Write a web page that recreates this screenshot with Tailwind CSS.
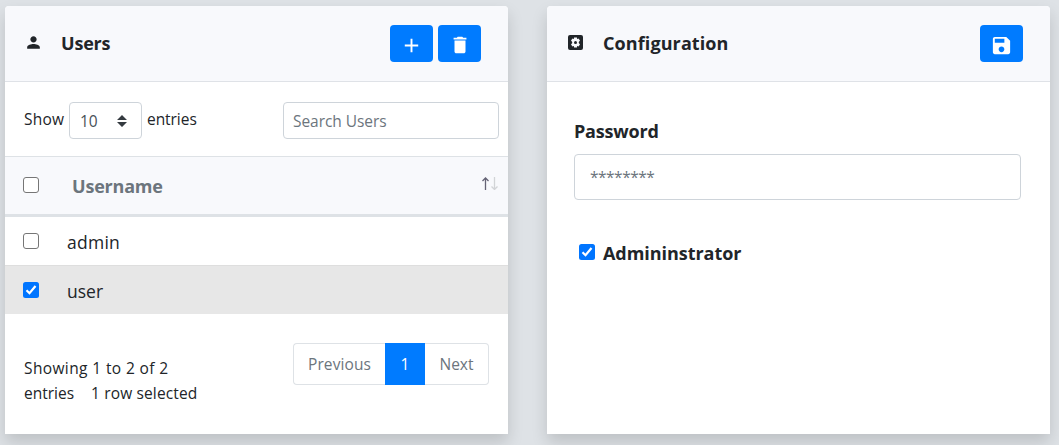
<!DOCTYPE html>
<html lang="en">
<head>
<meta charset="utf-8">
<title>Users</title>
<script src="https://cdn.jsdelivr.net/npm/@tailwindcss/browser@4"></script>
</head>
<body class="h-[445px] overflow-hidden bg-[#dee2e6] font-['Open_Sans','Noto_Sans',sans-serif] text-[15.5px] leading-6 text-[#212529]">
<main class="flex gap-[39px] pl-[5px] pt-[6px]">
  <section class="flex h-[428px] w-[503px] shrink-0 flex-col rounded-t bg-white shadow-[0_8px_16px_rgba(0,0,0,0.15)]">
    <header class="flex h-[76px] shrink-0 items-center rounded-t border-b border-[#dfe2e7] bg-[#f8f9fc] pl-[19px] pr-[27px]">
      <svg class="mb-[2px] size-[19px]" viewBox="0 0 24 24" fill="#212529"><path d="M12 12c2.200 0 4-1.800 4-4s-1.800-4-4-4-4 1.800-4 4 1.800 4 4 4zm0 2c-2.700 0-8 1.300-8 4v2h16v-2c0-2.700-5.300-4-8-4z"/></svg>
      <h2 class="mb-[2px] ml-[18px] text-lg leading-6 font-bold tracking-[-0.2px]">Users</h2>
      <button class="ml-auto flex h-[37px] w-[43px] items-center justify-center rounded bg-[#007bff]"><svg class="mt-[3px] size-[23px]" viewBox="0 0 24 24" fill="#fff"><path d="M19 13h-6v6h-2v-6H5v-2h6V5h2v6h6z"/></svg></button>
      <button class="ml-[5px] flex h-[37px] w-[43px] items-center justify-center rounded bg-[#007bff]"><svg class="mt-[3px] size-[22px]" viewBox="0 0 24 24" fill="#fff"><path d="M6 19c0 1.100.9 2 2 2h8c1.100 0 2-.9 2-2V7H6zM19 4h-3.500l-1-1h-5l-1 1H5v2h14z"/></svg></button>
    </header>
    <div class="flex h-[74px] shrink-0 items-start pl-[19px] pr-[9px] pt-5">
      <span class="mt-[5px] w-[45px] tracking-[0.2px]">Show</span>
      <div class="flex h-[37px] w-[73px] items-center justify-between rounded border border-[#ced4da] pl-[10px] pr-[13px] text-[#495057]"><span>10</span>
        <svg class="h-[12px] w-[12px]" viewBox="0 0 12 12" fill="#343a40"><path d="M1 5h10L6 0zM1 7h10L6 12z"/></svg>
      </div>
      <span class="ml-[5px] mt-[5px] tracking-[-0.05px]">entries</span>
      <input class="ml-auto h-[37px] w-[216px] rounded border border-[#ced4da] px-[9px] tracking-[-0.05px] placeholder:text-[#6c757d]" placeholder="Search Users">
    </div>
    <div class="flex h-[61px] shrink-0 items-center border-b-[3px] border-t border-[#dee2e6] bg-[#f8f9fc] pl-[18px] pr-[9px]">
      <span class="mb-[2px] size-4 rounded-[3px] border border-[#767676] bg-white"></span>
      <span class="ml-[33px] text-lg leading-6 font-bold tracking-[-0.2px] text-[#6c757d]">Username</span>
      <svg class="mb-[4px] ml-auto h-[13px] w-[19px]" viewBox="0 0 19 13" fill="none"><path stroke="#656375" stroke-width="1.300" d="M5.500 13V1M2.500 4l3-3 3 3"/><path stroke="#d2d4d7" stroke-width="1.300" d="M14.500 0v12M11.500 9.500l3 3 3-3"/></svg>
    </div>
    <div class="flex h-12 shrink-0 items-center pl-[18px]">
      <span class="size-4 rounded-[3px] border border-[#767676] bg-white"></span>
      <span class="ml-[28px] mt-[2px] text-[17.5px] tracking-[0.25px]">admin</span>
    </div>
    <div class="flex h-[49px] shrink-0 items-center border-t border-[#dedede] bg-[#e7e7e7] pl-[18px]">
      <svg class="size-4" viewBox="0 0 16 16"><rect width="16" height="16" rx="2.500" fill="#0075ff"/><path d="M3.500 8.200l3 3 6-7.200" fill="none" stroke="#fff" stroke-width="2.200"/></svg>
      <span class="ml-[28px] mt-[2px] text-[17.5px]">user</span>
    </div>
    <div class="flex items-start justify-between pl-[19px] pr-[19px] pt-[29px]">
      <div class="mt-[13px] leading-[25px]"><p class="tracking-[0.38px]">Showing 1 to 2 of 2</p><p>entries<span class="ml-[17px] tracking-[0.14px]">1 row selected</span></p></div>
      <nav class="flex h-[42px] w-[196px] text-[#6c757d]">
        <span class="flex w-[92px] items-center justify-center rounded-l border border-r-0 border-[#dee2e6] tracking-[0.1px]">Previous</span>
        <span class="flex w-[40px] items-center justify-center bg-[#007bff] text-white">1</span>
        <span class="flex w-[64px] items-center justify-center rounded-r border border-l-0 border-[#dee2e6]">Next</span>
      </nav>
    </div>
  </section>
  <section class="h-[428px] w-[503px] shrink-0 rounded-t bg-white shadow-[0_8px_16px_rgba(0,0,0,0.15)]">
    <header class="flex h-[76px] items-center rounded-t border-b border-[#dfe2e7] bg-[#f8f9fc] pl-[19px] pr-[27px]">
      <svg class="mb-[2px] size-[19px]" viewBox="0 0 19 19"><rect x="2" y="2" width="15" height="15" rx="2" fill="#212529"/><path d="M8 4.500h3v1.600l1.500-.6 1.500 2-1.200 1.400v1.200l1.200 1.400-1.500 2-1.500-.6v1.600H8v-1.600l-1.500.6-1.500-2 1.200-1.400V8.900L5 7.500l1.500-2 1.500.6z" fill="#f8f9fc"/><circle cx="9.500" cy="9.500" r="1.500" fill="#212529"/></svg>
      <h2 class="mb-[2px] ml-[18px] text-lg leading-6 font-bold tracking-[0.1px]">Configuration</h2>
      <button class="ml-auto flex h-[37px] w-[43px] items-center justify-center rounded bg-[#007bff]"><svg class="mt-[3px] size-[23px]" viewBox="0 0 24 24" fill="#fff"><path d="M17 3H5c-1.110 0-2 .9-2 2v14c0 1.100.89 2 2 2h14c1.100 0 2-.9 2-2V7zm-5 16c-1.660 0-3-1.340-3-3s1.340-3 3-3 3 1.340 3 3-1.340 3-3 3zm3-10H5V5h10z"/></svg></button>
    </header>
    <div class="flex flex-col pl-[27px] pr-[29px] pt-[37px]">
      <label class="text-lg leading-6 font-bold tracking-[-0.2px]">Password</label>
      <input class="mt-[11px] h-[46px] w-full rounded border border-[#ced4da] px-[15px] tracking-[-0.5px] placeholder:text-[#6c757d]" placeholder="********">
      <label class="mt-[41px] flex items-center pl-[5px]">
        <svg class="mb-[2px] size-4" viewBox="0 0 16 16"><rect width="16" height="16" rx="2.500" fill="#0075ff"/><path d="M3.500 8.200l3 3 6-7.200" fill="none" stroke="#fff" stroke-width="2.200"/></svg>
        <span class="ml-[8px] text-lg leading-6 font-bold tracking-[-0.05px]">Admininstrator</span>
      </label>
    </div>
  </section>
</main>
</body>
</html>
